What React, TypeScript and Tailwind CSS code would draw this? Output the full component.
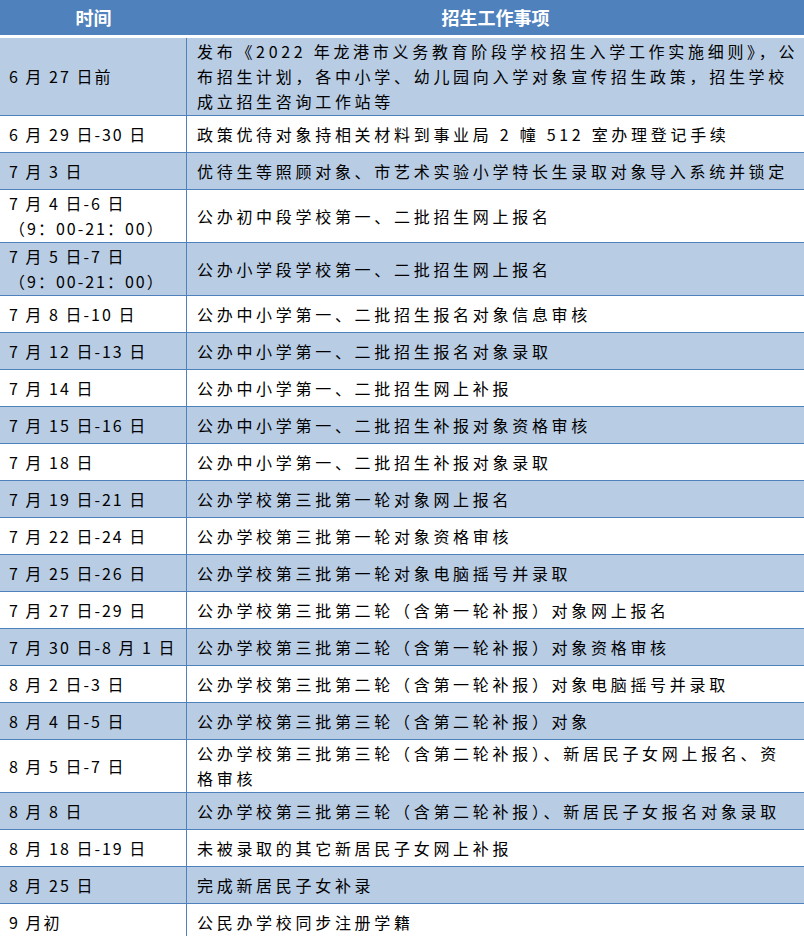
import React from "react";

type Row = { time: string[]; task: string[] };

const rows: Row[] = [
  {
    time: ["6 月 27 日前"],
    task: [
      "发布《2022 年龙港市义务教育阶段学校招生入学工作实施细则》，公",
      "布招生计划，各中小学、幼儿园向入学对象宣传招生政策，招生学校",
      "成立招生咨询工作站等",
    ],
  },
  { time: ["6 月 29 日-30 日"], task: ["政策优待对象持相关材料到事业局 2 幢 512 室办理登记手续"] },
  { time: ["7 月 3 日"], task: ["优待生等照顾对象、市艺术实验小学特长生录取对象导入系统并锁定"] },
  { time: ["7 月 4 日-6 日", "（9：00-21：00）"], task: ["公办初中段学校第一、二批招生网上报名"] },
  { time: ["7 月 5 日-7 日", "（9：00-21：00）"], task: ["公办小学段学校第一、二批招生网上报名"] },
  { time: ["7 月 8 日-10 日"], task: ["公办中小学第一、二批招生报名对象信息审核"] },
  { time: ["7 月 12 日-13 日"], task: ["公办中小学第一、二批招生报名对象录取"] },
  { time: ["7 月 14 日"], task: ["公办中小学第一、二批招生网上补报"] },
  { time: ["7 月 15 日-16 日"], task: ["公办中小学第一、二批招生补报对象资格审核"] },
  { time: ["7 月 18 日"], task: ["公办中小学第一、二批招生补报对象录取"] },
  { time: ["7 月 19 日-21 日"], task: ["公办学校第三批第一轮对象网上报名"] },
  { time: ["7 月 22 日-24 日"], task: ["公办学校第三批第一轮对象资格审核"] },
  { time: ["7 月 25 日-26 日"], task: ["公办学校第三批第一轮对象电脑摇号并录取"] },
  { time: ["7 月 27 日-29 日"], task: ["公办学校第三批第二轮（含第一轮补报）对象网上报名"] },
  { time: ["7 月 30 日-8 月 1 日"], task: ["公办学校第三批第二轮（含第一轮补报）对象资格审核"] },
  { time: ["8 月 2 日-3 日"], task: ["公办学校第三批第二轮（含第一轮补报）对象电脑摇号并录取"] },
  { time: ["8 月 4 日-5 日"], task: ["公办学校第三批第三轮（含第二轮补报）对象"] },
  {
    time: ["8 月 5 日-7 日"],
    task: ["公办学校第三批第三轮（含第二轮补报）、新居民子女网上报名、资", "格审核"],
  },
  { time: ["8 月 8 日"], task: ["公办学校第三批第三轮（含第二轮补报）、新居民子女报名对象录取"] },
  { time: ["8 月 18 日-19 日"], task: ["未被录取的其它新居民子女网上补报"] },
  { time: ["8 月 25 日"], task: ["完成新居民子女补录"] },
  { time: ["9 月初"], task: ["公民办学校同步注册学籍"] },
];

export default function App() {
  return (
    <div
      className="w-[804px] bg-white text-black"
      style={{ fontFamily: '"Noto Sans CJK SC", "Noto Sans", sans-serif' }}
    >
      {/* 表头 */}
      <div className="grid h-[38px] grid-cols-[187px_1fr] border-b-[3px] border-white bg-[#4f81bd] text-[18px] font-bold text-white">
        <div className="flex items-center justify-center">时间</div>
        <div className="flex items-center justify-center">招生工作事项</div>
      </div>

      {rows.map((row, i) => (
        <div
          key={i}
          className={`grid min-h-[37px] grid-cols-[187px_1fr] border-b border-[#4f81bd] text-[16px] leading-[25px] ${
            i % 2 === 0 ? "bg-[#b8cce4]" : "bg-white"
          }`}
        >
          <div className="flex flex-col justify-center border-r border-[#4f81bd] py-[1px] pl-[9px] tracking-[2px]">
            {row.time.map((t, j) => (
              <div key={j} className="whitespace-nowrap">
                {t}
              </div>
            ))}
          </div>
          <div className="flex flex-col justify-center py-[1px] pl-[10px] tracking-[3.7px]">
            {row.task.map((t, j) => (
              <div key={j} className="whitespace-nowrap">
                {t}
              </div>
            ))}
          </div>
        </div>
      ))}
    </div>
  );
}
